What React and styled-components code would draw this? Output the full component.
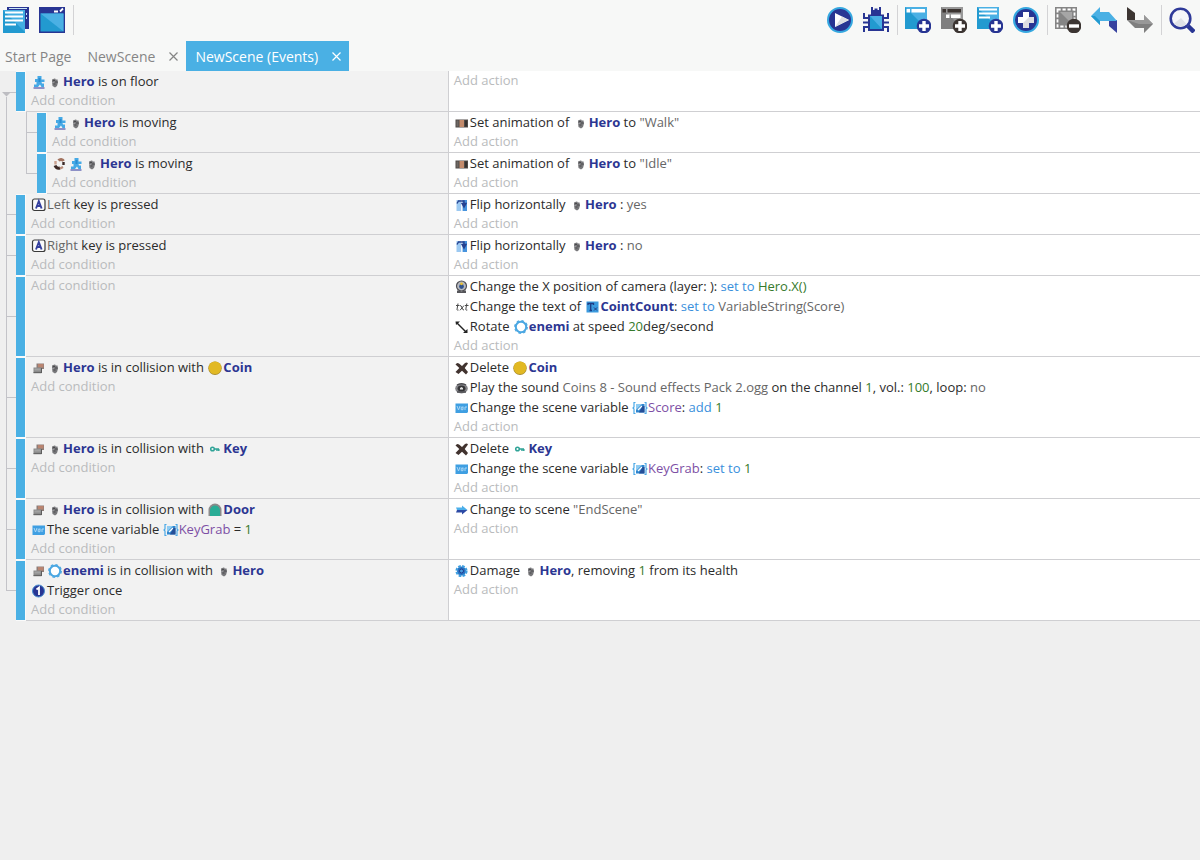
import React from 'react';
import styled, { createGlobalStyle, ThemeProvider, css } from 'styled-components';

const theme = {
  color: {
    primary: '#4ab0e4',
    chrome: '#f7f8f7',
    canvas: '#efefef',
    condition: '#f2f2f2',
    line: '#cfcfd2',
    tree: '#c3c3c8',
    text: '#2b2b2b',
    muted: '#b9bbbd',
    object: '#2c3692',
    string: '#666666',
    number: '#357a2b',
    operator: '#3a8fdc',
    variable: '#7d4fa5'
  },
  font: '"Segoe UI", "Open Sans", "Noto Sans", sans-serif'
};

const GlobalStyle = createGlobalStyle`
  * {
    box-sizing: border-box;
  }
  body {
    margin: 0;
    background: ${theme.color.canvas};
    color: ${theme.color.text};
    font-family: ${theme.font};
    font-size: 13px;
  }
  button {
    background: none;
    border: 0;
    padding: 0;
    font: inherit;
    color: inherit;
    cursor: pointer;
  }
`;

const Header = styled.header`
  background: ${({ theme }) => theme.color.chrome};
`;

const Toolbar = styled.div`
  display: flex;
  justify-content: space-between;
  height: 40px;
`;

const ToolGroup = styled.div`
  display: flex;
  align-items: center;
  ${({ $start }) => $start && css`margin-left: -2px;`}
`;

const ToolButton = styled.button`
  display: flex;
  align-items: center;
  justify-content: center;
  width: 36px;
  height: 40px;
`;

const Separator = styled.span`
  width: 1px;
  height: 30px;
  margin: 0 2px 0 3px;
  background: #d3d3d5;
`;

const Tabs = styled.nav`
  display: flex;
  height: 31px;
`;

const Tab = styled.div`
  display: flex;
  align-items: center;
  color: ${({ $active }) => ($active ? '#fff' : '#858585')};
  background: ${({ $active, theme }) => ($active ? theme.color.primary : 'transparent')};
  font-size: 14px;
  margin-top: 1px;
`;

const TabLabel = styled.button`
  height: 100%;
  padding: 0 ${({ $closable }) => ($closable ? '14px' : '7px')} 0 ${({ $first }) => ($first ? '5px' : '9px')};
  white-space: nowrap;
`;

const TabClose = styled.button`
  display: flex;
  align-items: center;
  height: 100%;
  padding-right: 8px;
`;

const Sheet = styled.main`
  display: flex;
  flex-direction: column;
`;

const EventRow = styled.section`
  display: flex;
`;

const Gutter = styled.div`
  display: flex;
  flex: 0 0 ${({ $depth }) => ($depth ? '37px' : '16px')};
  padding-left: 6px;
`;

const Trunk = styled.span`
  width: 20px;
  border-left: 1px solid ${({ theme }) => theme.color.tree};
`;

const Branch = styled.span`
  flex: 1;
  display: flex;
  flex-direction: column;

  &::before,
  &::after {
    content: '';
    flex: 1;
    border-left: 1px solid ${({ theme }) => theme.color.tree};
  }
  &::before {
    border-bottom: 1px solid ${({ theme }) => theme.color.tree};
  }
  &::after {
    border-left-color: ${({ $last, theme }) => ($last ? 'transparent' : theme.color.tree)};
  }
`;

const RootGutter = styled.div`
  display: flex;
  flex-direction: column;
  flex: 0 0 16px;
  padding: 21px 0 0 2px;

  &::after {
    content: '';
    flex: 1;
    margin-left: 4px;
    border-left: 1px solid ${({ theme }) => theme.color.tree};
  }
`;

const FoldButton = styled.button`
  display: flex;
  height: 5px;
`;

const Handle = styled.span`
  flex: 0 0 10px;
  background: ${({ theme }) => theme.color.primary};
  border: solid #fafafa;
  border-width: 1px 1px 1px 0;
`;

const Body = styled.div`
  display: flex;
  flex: 1;
  border-bottom: 1px solid ${({ theme }) => theme.color.line};
`;

const Column = styled.div`
  padding: 0 0 1px 5px;
  overflow: hidden;
`;

const Conditions = styled(Column)`
  flex: 0 0 calc(37.4vw - ${({ $depth }) => ($depth ? '47px' : '26px')});
  background: ${({ theme }) => theme.color.condition};
  border-right: 1px solid ${({ theme }) => theme.color.line};
`;

const Actions = styled(Column)`
  flex: 1;
  background: #fff;
`;

const Line = styled.div`
  height: 20px;
  line-height: 20px;
  white-space: nowrap;
`;

const AddButton = styled.button`
  display: block;
  height: 19px;
  line-height: 19px;
  color: ${({ theme }) => theme.color.muted};
`;

const Glyph = styled.svg`
  width: 16px;
  height: 16px;
  vertical-align: -4px;
`;

const Obj = styled.b`
  font-weight: 700;
  color: ${({ theme }) => theme.color.object};
`;

const Param = styled.span`
  color: ${({ $type, theme }) => theme.color[$type]};
`;

const ICONS = {
  platform: (
    <>
      <path d="M6.500 2h4v3.500h3v2.500h-3l.5 1.500h2V13h-2.500l-1.500-2.500L7 13H3v-2.500h2.500V8H4V5h2.500z" fill="#45a9e6" />
      <path d="M7.500 4h2v4h-2z" fill="#2b8bd0" />
      <path d="M2.500 14h11" stroke="#4a4fa8" strokeWidth="1.200" />
    </>
  ),
  hero: (
    <>
      <path d="M5 5.500 7.500 4.500l3 1 .5 3-1 3.500-2 1.500L5.500 12 5 8z" fill="#77777a" />
      <path d="M6 6.500h2M8 8h2.500M6.500 10h2" stroke="#4a4a4d" strokeWidth="1" />
      <path d="M8.500 5.500H10M5.500 8.500h1" stroke="#b5b5b8" strokeWidth="1" />
    </>
  ),
  invert: (
    <g fill="none" strokeWidth="3">
      <path d="M6.500 4.500C8 3 10.500 3 11.500 5" stroke="#a3735f" />
      <path d="M11.500 6v3" stroke="#3a2724" strokeWidth="2.400" />
      <path d="M3 9.500C4 12 6 12.500 8 12" stroke="#3a2724" />
      <path d="M3.500 5v3.500" stroke="#c9a08e" strokeWidth="2.400" />
      <path d="M8 12.500l3-1.500" stroke="#b88b77" strokeWidth="2.400" />
    </g>
  ),
  keyboard: (
    <>
      <rect x="1.500" y="2" width="12.500" height="11.500" rx="2" fill="#fafafa" stroke="#3a3a3a" strokeWidth="1.200" />
      <path d="M5 11.500 7.800 4.200 10.600 11.500M6 9h3.600" stroke="#343f9e" strokeWidth="1.900" fill="none" />
    </>
  ),
  collision: (
    <>
      <path d="M5.500 3.500H13V9H5.500z" fill="#8c7d78" />
      <path d="M7 4h5.500v3.500H7z" fill="#b98470" />
      <path d="M2.500 7.500h8V13h-8z" fill="#8b8b8b" />
      <path d="M3.500 8.500h6v2h-6z" fill="#a2a2a2" />
      <path d="M2.500 12.700h8M10.500 8v5" stroke="#5d5d5d" />
    </>
  ),
  coin: (
    <>
      <circle cx="8" cy="8.300" r="6.700" fill="#a98c2c" />
      <circle cx="8" cy="7.700" r="6.300" fill="#e2b923" />
    </>
  ),
  key: (
    <g fill="none" stroke="#2fa397" strokeWidth="1.500">
      <circle cx="5.500" cy="8" r="1.800" />
      <path d="M7.300 8H12M10 8v2M11.800 8v2" />
    </g>
  ),
  door: (
    <>
      <path d="M1.500 14V8a6.500 6.500 0 0 1 13 0v6z" fill="#8b8b8b" />
      <path d="M3 14V8.500a5 5 0 0 1 10 0V14z" fill="#29ad96" />
    </>
  ),
  variable: (
    <>
      <path d="M1.500 3.500H14V12L13 13H1.500z" fill="#3f9fe2" />
      <path d="M3 6l1.500 4L6 6M9 7.200H7.200v2.500H9V6.500M11 10V7h2" fill="none" stroke="#a9d6f5" strokeWidth="1" />
    </>
  ),
  sceneVar: (
    <>
      <path d="M3.500 2.500H2V7L1 8l1 1v4.500h1.500M12.500 2.500H14V7l1 1-1 1v4.500h-1.500" fill="none" stroke="#4aa8e6" strokeWidth="1.200" />
      <rect x="4" y="4" width="8.500" height="8.500" fill="#2f86cf" />
      <path d="M4 4h6L4 10z" fill="#8fccf2" />
      <path d="M6 10l4-4" stroke="#fff" strokeWidth="1.500" />
      <path d="M10.500 6h2v6.500H7z" fill="#244e98" />
    </>
  ),
  enemi: (
    <>
      <circle cx="8" cy="8" r="5.200" fill="#fff" stroke="#4aa7e2" strokeWidth="2" />
      <circle cx="8" cy="8" r="6.300" fill="none" stroke="#4aa7e2" strokeWidth="1.200" strokeDasharray="2.600 2.300" />
    </>
  ),
  once: (
    <>
      <circle cx="7.500" cy="8" r="6" fill="#283593" stroke="#4a8fd0" strokeWidth="1" />
      <path d="M5.500 6.500 8 4.500V12" fill="none" stroke="#fff" strokeWidth="1.800" />
    </>
  ),
  animation: (
    <>
      <rect x="1.500" y="4.500" width="12.500" height="8" fill="#504b48" />
      <rect x="2.500" y="5.500" width="2" height="6" fill="#6e6864" />
      <rect x="5.500" y="5" width="4.500" height="7" fill="#c38b6c" />
      <rect x="11" y="5.500" width="2" height="6" fill="#37322f" />
    </>
  ),
  flip: (
    <>
      <rect x="2.500" y="3" width="4.500" height="11" fill="#9cc9f2" />
      <rect x="8.500" y="3" width="4.500" height="11" fill="#4793dd" />
      <path d="M7.700 5v9" stroke="#eef4fa" />
      <path d="M3 6.500 4.500 4H10v5M8 6.500h4l-2 3.500z" fill="none" stroke="#26418f" strokeWidth="1.400" />
    </>
  ),
  camera: (
    <>
      <circle cx="7.500" cy="7" r="5" fill="#b9bbc0" stroke="#4f4f54" strokeWidth="1.200" />
      <circle cx="7.500" cy="7.500" r="2.400" fill="#31538d" />
      <circle cx="7.500" cy="4.800" r="1.400" fill="#e8bf32" />
      <path d="M3 11.500h2l2.500 1 2.500-1h2V14H3z" fill="#55555a" />
    </>
  ),
  txt: (
    <path
      d="M4 4.500 3 10.500q0 1 1.500.5M2 6.500h3.500M6 6.500q1.500 0 2 2.300t2 2.200M10 6.500 6 11.300M12.800 4.500l-1 6q0 1 1.500.5M11 6.500h3.500"
      fill="none"
      stroke="#4b4b4b"
    />
  ),
  textObject: (
    <>
      <rect x="1.500" y="2.500" width="12" height="11" fill="#3b9ade" />
      <path d="M3 6V4.500h5.500V6M5.700 4.500v7M4.500 11.500h2.500" fill="none" stroke="#1d3c84" strokeWidth="1.300" />
      <path d="M9 8.500l3 3M12 8.500l-3 3" stroke="#1d3c84" />
    </>
  ),
  rotate: (
    <>
      <path d="M3 4l9 9" stroke="#222" strokeWidth="1.400" />
      <path d="M1.500 2.500h4.500L2 6zM13.500 14H9l4.500-4z" fill="#222" />
    </>
  ),
  remove: (
    <path d="M1.500 4.500q1.500-2.500 3.500-1L8 6 11 3q2-1 3 .5L10.700 8l3.300 4-2 2.500L8 10.800 4.500 14l-3-2L5.300 8z" fill="#41332f" />
  ),
  sound: (
    <>
      <ellipse cx="7.500" cy="8.500" rx="6.300" ry="5" fill="#86868a" />
      <path d="M3 5a6 4 0 0 1 9 0" fill="none" stroke="#4c4c50" strokeWidth="1.500" />
      <ellipse cx="7.500" cy="8.500" rx="4" ry="3" fill="#343437" />
      <path d="M6 8l1.500-1L9 8v1.500H6z" fill="#e3e3e3" />
      <path d="M3 12h9" stroke="#4c4c50" strokeWidth="1.500" />
    </>
  ),
  scene: (
    <>
      <path d="M2 5.500h6V3.500L13.500 8H3z" fill="#4cafea" />
      <path d="M3 8h10.500L8 12.500v-2H2z" fill="#2c4aa5" />
    </>
  ),
  health: (
    <>
      <circle cx="7.500" cy="8" r="4.500" fill="#2872c2" />
      <circle cx="7.500" cy="8" r="5" fill="none" stroke="#3f9fe0" strokeWidth="2.200" strokeDasharray="2.600 1.330" />
      <circle cx="7.500" cy="8" r="2" fill="#4a9ee0" stroke="#22398c" />
    </>
  )
};

const Icon = ({ name }) => (
  <Glyph viewBox="0 0 16 16" aria-hidden="true">{ICONS[name]}</Glyph>
);

const Badge = ({ fill, minus }) => (
  <>
    <circle cx="19" cy="19" r="7.300" fill={fill} />
    <path d={minus ? 'M14 19h10' : 'M14 19h10M19 14v10'} stroke="#fff" strokeWidth="3.400" />
  </>
);

const TOOL_ICONS = {
  events: (
    <>
      <path d="M4 0h22v22H4z" fill="#283593" />
      <path d="M6 1.500h18M23.500 6v2M23.500 10v2" stroke="#c8e6f6" strokeWidth="1" />
      <path d="M0 3h22v23H0z" fill="#229ad0" />
      <path d="M0 3h22v22z" fill="#43aee2" />
      <path d="M2 5.500h18M2 9.500h18M2 13.500h18M2 17.500h11" stroke="#fff" strokeWidth="1.800" />
    </>
  ),
  scene: (
    <>
      <path d="M0 0h26v26H0z" fill="#283593" />
      <path d="M1.500 6.500h23v18h-23z" fill="#229ad0" />
      <path d="M1.500 6.500h23v18z" fill="#4ab0e4" />
      <path d="M15 4.500h4M21 4.500l3-3" stroke="#fff" strokeWidth="1.800" />
    </>
  ),
  play: (
    <>
      <circle cx="13" cy="13" r="12" fill="#283593" stroke="#35a8e0" strokeWidth="2" />
      <path d="M8 6l14 7-14 7z" fill="#fff" />
      <path d="M8 20l7-10.500L22 13z" fill="#dedfe3" />
    </>
  ),
  debug: (
    <>
      <path d="M1 6v5h5M25 6v5h-5M0 15.500h6M26 15.500h-6M1 25v-5h5M25 25v-5h-5" fill="none" stroke="#283593" strokeWidth="2" />
      <path d="M8 0h2v3h1.500V1.500h3V3H16V0h2v8H8z" fill="#283593" />
      <path d="M5 7.500h16V24H5z" fill="#283593" />
      <path d="M7 9h12v13H7z" fill="#229ad0" />
      <path d="M7 9h12v13z" fill="#4ab0e4" />
    </>
  ),
  addEvent: (
    <>
      <path d="M0 0h22v22H0z" fill="#229ad0" />
      <path d="M0 0h22v22z" fill="#4ab0e4" />
      <path d="M1.500 2h3.500v3.500H1.500zM6.500 2H20v3.500H6.500z" fill="#fff" />
      <Badge fill="#283593" />
    </>
  ),
  addSubEvent: (
    <>
      <path d="M0 0h22v22H0z" fill="#7f7f7f" />
      <path d="M0 0h22v22z" fill="#989898" />
      <path d="M1.500 2h3.500v3.500H1.500zM6.500 2H20v3.500H6.500z" fill="#3c3532" />
      <path d="M5 7.500h3.500V11H5zM10 7.500h9.500V11H10z" fill="#fff" />
      <Badge fill="#3c3532" />
    </>
  ),
  addComment: (
    <>
      <path d="M0 0h22v22H0z" fill="#229ad0" />
      <path d="M0 0h22v22z" fill="#4ab0e4" />
      <path d="M2 2.500h18M2 6.500h18M2 10.500h11" stroke="#fff" strokeWidth="1.800" />
      <Badge fill="#283593" />
    </>
  ),
  add: (
    <>
      <circle cx="13" cy="13" r="12" fill="#283593" stroke="#35a8e0" strokeWidth="2" />
      <path d="M10 5h6v5h5v6h-5v5h-6v-5H5v-6h5z" fill="#fff" />
      <path d="M16 10h5v6h-5v5h-6v-5z" fill="#dedfe3" />
    </>
  ),
  remove: (
    <>
      <path d="M0 0h22v22H0z" fill="#858585" />
      <path d="M5 5h12v12z" fill="#a6a6a6" />
      <path d="M2.500 2.500h17v17h-17z" fill="none" stroke="#fff" strokeWidth="1.800" strokeDasharray="3.200 1.800" />
      <Badge fill="#3c3532" minus />
    </>
  ),
  undo: (
    <>
      <path d="M18 13h8v13l-8-7z" fill="#37429f" />
      <path d="M0 9 9 0v5h9l8 9H9v4z" fill="#4ab0e4" />
      <path d="M0 9h4l5 5v4z" fill="#229ad0" />
    </>
  ),
  redo: (
    <>
      <path d="M0 0l8 6v7H0z" fill="#3c3532" />
      <path d="M0 13h17V8l9 9-9 9v-5H8z" fill="#7f7f7f" />
      <path d="M0 13h17V8l9 9H12z" fill="#989898" />
    </>
  ),
  search: (
    <>
      <path d="M19 19l6 6" stroke="#283593" strokeWidth="4.500" />
      <circle cx="11.500" cy="11.500" r="9.800" fill="#f5f6f9" stroke="#2f3a99" strokeWidth="2.600" />
      <path d="M5 16.500 12 11l5.500 6a8.500 8.500 0 0 1-12.500-.5z" fill="#dfe1e7" />
    </>
  )
};

const Tool = ({ name, label }) => (
  <ToolButton type="button" aria-label={label}>
    <svg width="26" height="26" viewBox="0 0 26 26" aria-hidden="true">{TOOL_ICONS[name]}</svg>
  </ToolButton>
);

const CloseButton = ({ label }) => (
  <TabClose type="button" aria-label={label}>
    <svg width="9" height="9" viewBox="0 0 9 9" aria-hidden="true">
      <path d="M.5.5l8 8M8.500.5l-8 8" stroke="currentColor" strokeWidth="1.200" />
    </svg>
  </TabClose>
);

const Str = ({ children }) => <Param $type="string">{children}</Param>;
const Num = ({ children }) => <Param $type="number">{children}</Param>;
const Op = ({ children }) => <Param $type="operator">{children}</Param>;
const Hero = () => <><Icon name="hero" /><Obj>Hero</Obj></>;
const Coin = () => <><Icon name="coin" /><Obj>Coin</Obj></>;
const Key = () => <><Icon name="key" /><Obj>Key</Obj></>;
const Enemi = () => <><Icon name="enemi" /><Obj>enemi</Obj></>;
const SceneVar = ({ children }) => <><Icon name="sceneVar" /><Param $type="variable">{children}</Param></>;

const EVENTS = [
  {
    root: true,
    conditions: [<><Icon name="platform" /><Hero /> is on floor</>],
    actions: []
  },
  {
    depth: 1,
    conditions: [<><Icon name="platform" /><Hero /> is moving</>],
    actions: [<><Icon name="animation" />Set animation of <Hero /> to <Str>"Walk"</Str></>]
  },
  {
    depth: 1,
    last: true,
    conditions: [<><Icon name="invert" /><Icon name="platform" /><Hero /> is moving</>],
    actions: [<><Icon name="animation" />Set animation of <Hero /> to <Str>"Idle"</Str></>]
  },
  {
    conditions: [<><Icon name="keyboard" /><Str>Left</Str> key is pressed</>],
    actions: [<><Icon name="flip" />Flip horizontally <Hero /> : <Str>yes</Str></>]
  },
  {
    conditions: [<><Icon name="keyboard" /><Str>Right</Str> key is pressed</>],
    actions: [<><Icon name="flip" />Flip horizontally <Hero /> : <Str>no</Str></>]
  },
  {
    conditions: [],
    actions: [
      <><Icon name="camera" />Change the X position of camera (layer: ): <Op>set to</Op> <Num>Hero.X()</Num></>,
      <><Icon name="txt" />Change the text of <Icon name="textObject" /><Obj>CointCount</Obj>: <Op>set to</Op> <Str>VariableString(Score)</Str></>,
      <><Icon name="rotate" />Rotate <Enemi /> at speed <Num>20</Num>deg/second</>
    ]
  },
  {
    conditions: [<><Icon name="collision" /><Hero /> is in collision with <Coin /></>],
    actions: [
      <><Icon name="remove" />Delete <Coin /></>,
      <><Icon name="sound" />Play the sound <Str>Coins 8 - Sound effects Pack 2.ogg</Str> on the channel <Num>1</Num>, vol.: <Num>100</Num>, loop: <Str>no</Str></>,
      <><Icon name="variable" />Change the scene variable <SceneVar>Score</SceneVar>: <Op>add</Op> <Num>1</Num></>
    ]
  },
  {
    conditions: [<><Icon name="collision" /><Hero /> is in collision with <Key /></>],
    actions: [
      <><Icon name="remove" />Delete <Key /></>,
      <><Icon name="variable" />Change the scene variable <SceneVar>KeyGrab</SceneVar>: <Op>set to</Op> <Num>1</Num></>
    ]
  },
  {
    conditions: [
      <><Icon name="collision" /><Hero /> is in collision with <Icon name="door" /><Obj>Door</Obj></>,
      <><Icon name="variable" />The scene variable <SceneVar>KeyGrab</SceneVar> = <Num>1</Num></>
    ],
    actions: [<><Icon name="scene" />Change to scene <Str>"EndScene"</Str></>]
  },
  {
    last: true,
    conditions: [
      <><Icon name="collision" /><Enemi /> is in collision with <Hero /></>,
      <><Icon name="once" />Trigger once</>
    ],
    actions: [<><Icon name="health" />Damage <Hero />, removing <Num>1</Num> from its health</>]
  }
];

const Event = ({ root, depth = 0, last, conditions, actions }) => (
  <EventRow>
    {root ? (
      <RootGutter>
        <FoldButton type="button" aria-label="Fold sub-events">
          <svg width="14" height="5" viewBox="0 0 14 5" aria-hidden="true">
            <path d="M0 0h9L4.500 4.500z" fill="#bdbdc2" />
            <path d="M8 .5h6" stroke="#c3c3c8" />
          </svg>
        </FoldButton>
      </RootGutter>
    ) : (
      <Gutter $depth={depth}>
        {depth > 0 && <Trunk />}
        <Branch $last={last} />
      </Gutter>
    )}
    <Handle />
    <Body>
      <Conditions $depth={depth}>
        {conditions.map((content, i) => <Line key={i}>{content}</Line>)}
        <AddButton type="button">Add condition</AddButton>
      </Conditions>
      <Actions>
        {actions.map((content, i) => <Line key={i}>{content}</Line>)}
        <AddButton type="button">Add action</AddButton>
      </Actions>
    </Body>
  </EventRow>
);

const App = () => (
  <ThemeProvider theme={theme}>
    <GlobalStyle />
    <Header>
      <Toolbar>
        <ToolGroup $start>
          <Tool name="events" label="Project manager" />
          <Tool name="scene" label="Scene" />
          <Separator />
        </ToolGroup>
        <ToolGroup>
          <Tool name="play" label="Preview" />
          <Tool name="debug" label="Debug" />
          <Separator />
          <Tool name="addEvent" label="Add event" />
          <Tool name="addSubEvent" label="Add sub-event" />
          <Tool name="addComment" label="Add comment" />
          <Tool name="add" label="Add other" />
          <Separator />
          <Tool name="remove" label="Delete" />
          <Tool name="undo" label="Undo" />
          <Tool name="redo" label="Redo" />
          <Separator />
          <Tool name="search" label="Search" />
        </ToolGroup>
      </Toolbar>
      <Tabs>
        <Tab>
          <TabLabel type="button" $first>Start Page</TabLabel>
        </Tab>
        <Tab>
          <TabLabel type="button" $closable>NewScene</TabLabel>
          <CloseButton label="Close NewScene" />
        </Tab>
        <Tab $active>
          <TabLabel type="button" $closable>NewScene (Events)</TabLabel>
          <CloseButton label="Close NewScene (Events)" />
        </Tab>
      </Tabs>
    </Header>
    <Sheet>
      {EVENTS.map((event, i) => <Event key={i} {...event} />)}
    </Sheet>
  </ThemeProvider>
);

export default App;
